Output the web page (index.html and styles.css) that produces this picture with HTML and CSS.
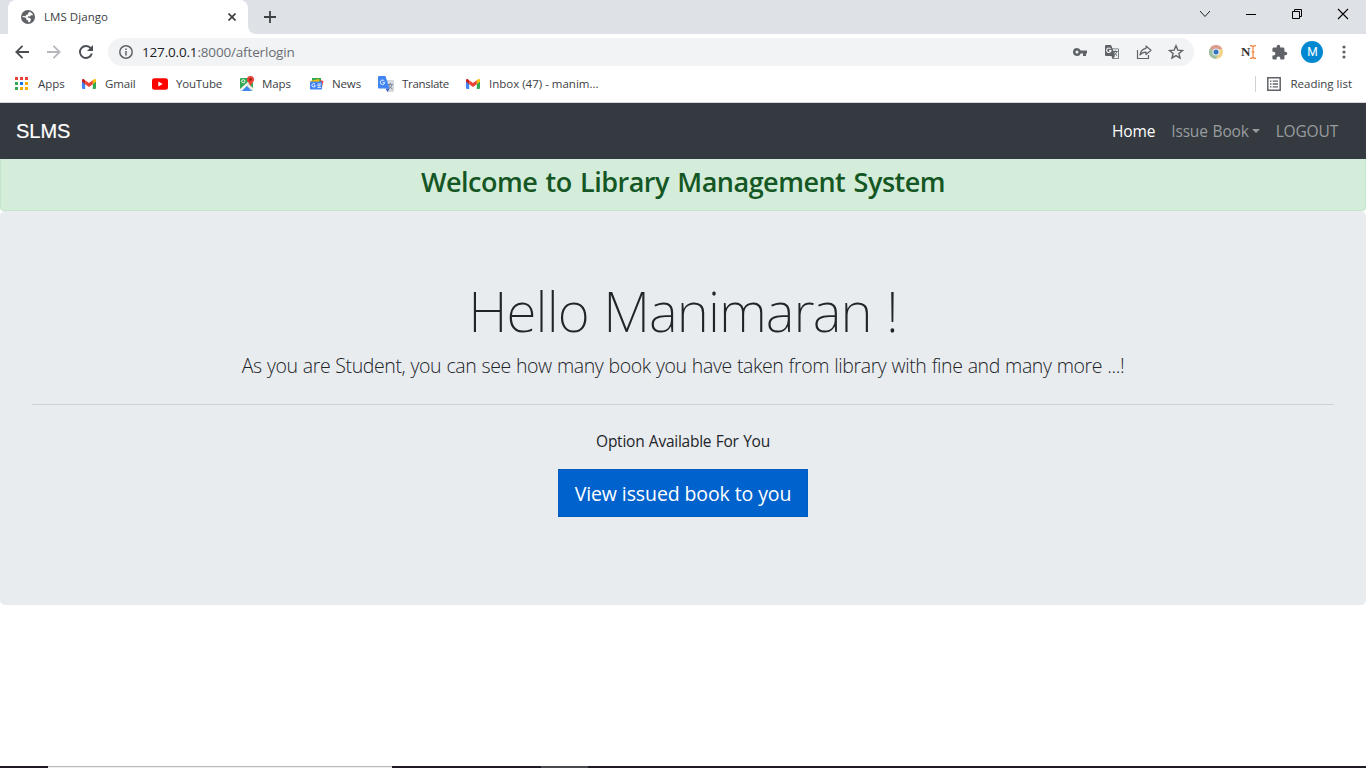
FILE: index.html
```html
<!DOCTYPE html>
<html lang="en">
<head>
<meta charset="utf-8">
<title>LMS Django</title>
<link rel="stylesheet" href="styles.css">
</head>
<body>
<div class="window">
  <header class="tabstrip">
    <div class="tab">
      <svg class="globe" width="14" height="14" viewBox="0 0 14 14"><circle cx="7" cy="7" r="7" fill="#5f6368"/><path d="M8.300 1.800c1.800.4 3.200 1.700 3.800 3.400H9.800L9 6.500 7.200 6.200 6.500 7.500l2.300.6 1.200 1.200-.8 2.500-2 .6.100-1.700-2-1.200L5 7.800 1.500 7V6l2.800.2L5.200 5l1.600-.5.3-1.300z" fill="#fff"/></svg>
      <span class="tab-title">LMS Django</span>
      <svg class="tab-close" width="8" height="8" viewBox="0 0 8 8"><path d="M.5.5l7 7M7.500.5l-7 7" stroke="#3c4043" stroke-width="1.700"/></svg>
    </div>
    <svg class="tab-foot" width="8" height="8" viewBox="0 0 8 8"><path d="M0 0a8 8 0 0 0 8 8H0z" fill="#fff"/></svg>
    <svg class="tab-new" width="12" height="12" viewBox="0 0 12 12"><path d="M6 0v12M0 6h12" stroke="#3c4043" stroke-width="1.800"/></svg>
    <div class="controls">
      <svg width="12" height="12" viewBox="0 0 12 12"><path d="M1 3l5 5.500L11 3" fill="none" stroke="#222" stroke-width="1"/></svg>
      <svg width="12" height="12" viewBox="0 0 12 12"><path d="M1 6.500h10" stroke="#000"/></svg>
      <svg width="12" height="12" viewBox="0 0 12 12"><path d="M1.500 3.500h7v7h-7zM3.500 3V1.500h7v7H9" fill="none" stroke="#000"/></svg>
      <svg width="12" height="12" viewBox="0 0 12 12"><path d="M1 1l10 10M11 1L1 11" stroke="#000" stroke-width="1.100"/></svg>
    </div>
  </header>

  <div class="toolbar">
    <svg class="nav-icon" width="14" height="14" viewBox="0 0 14 14"><path d="M14 7H1.500M7.500.8L1.300 7l6.200 6.200" fill="none" stroke="#4b4f54" stroke-width="1.800"/></svg>
    <svg class="nav-icon" width="14" height="14" viewBox="0 0 14 14"><path d="M0 7h12.500M6.500.8L12.700 7l-6.200 6.200" fill="none" stroke="#b6b8bb" stroke-width="1.800"/></svg>
    <svg class="nav-icon" width="14" height="14" viewBox="0 0 14 14"><path d="M11.800 3.400A6 6 0 1 0 12.800 8.500" fill="none" stroke="#4b4f54" stroke-width="1.900"/><path d="M14 0v6H8z" fill="#4b4f54"/></svg>
    <div class="omnibox">
      <svg width="14" height="14" viewBox="0 0 14 14"><circle cx="7" cy="7" r="6.200" fill="none" stroke="#5f6368" stroke-width="1.500"/><path d="M7 6v4.500M7 3.400v1.500" stroke="#5f6368" stroke-width="1.500"/></svg>
      <span class="url"><span class="host">127.0.0.1</span>:8000/afterlogin</span>
      <div class="omni-icons">
        <svg width="16" height="16" viewBox="0 0 16 16"><path fill-rule="evenodd" d="M5 4a4 4 0 1 0 3.700 5.500H11V12h3V9.500h1v-3H8.700A4 4 0 0 0 5 4zm0 2.500a1.500 1.500 0 1 1 0 3 1.500 1.500 0 0 1 0-3z" fill="#5f6368"/></svg>
        <svg width="16" height="16" viewBox="0 0 16 16"><path d="M2 1h5l1.500 3.500H14a1 1 0 0 1 1 1V14a1 1 0 0 1-1 1H8.500L7.500 12H2a1 1 0 0 1-1-1V2a1 1 0 0 1 1-1z" fill="#5f6368"/><path d="M8.800 5.300h5.400v8.900H9.300l1.600-2z" fill="#f1f3f4"/><path d="M6.700 5A2.200 2.200 0 1 0 7 6.600H5" fill="none" stroke="#f1f3f4" stroke-width="1.100"/><path d="M9 7.500h4.700M11.300 6.500v1M12.800 7.500c-.4 1.700-1.500 3-3 4M10 8c.7 1.700 2 2.800 3.300 3.800" fill="none" stroke="#5f6368"/></svg>
        <svg width="16" height="16" viewBox="0 0 16 16"><path d="M1.500 6v8.500h11V11" fill="none" stroke="#5f6368" stroke-width="1.200"/><path d="M10 2l5 4.300-5 4.200V8.200c-3 0-4.500.8-6 2.800.5-3.500 2.500-6.200 6-6.700z" fill="none" stroke="#5f6368" stroke-width="1.200" stroke-linejoin="round"/></svg>
        <svg width="16" height="16" viewBox="0 0 16 16"><path d="M8 1.800l1.800 4.300 4.700.4-3.600 3 1.100 4.600L8 11.600l-4 2.500 1.100-4.600-3.600-3 4.700-.4z" fill="none" stroke="#5f6368" stroke-width="1.400"/></svg>
      </div>
    </div>
    <div class="extensions">
      <svg width="14" height="14" viewBox="0 0 14 14"><circle cx="7" cy="7" r="7" fill="#f0d48a"/><path d="M7 7L1 3.300A7 7 0 0 1 13.300 4H7z" fill="#dc9a8c"/><path d="M7 7L1 3.300A7 7 0 0 0 6.500 14l3-5z" fill="#9fc0a3"/><circle cx="7" cy="7" r="3.600" fill="#e8eef5"/><circle cx="7" cy="7" r="2.500" fill="#3474bd"/></svg>
      <div class="ext-n"><span>N</span><svg width="6" height="14" viewBox="0 0 6 14"><path d="M0 .6c1.500 0 3 .4 3 1.400 0-1 1.500-1.400 3-1.400M3 2v10M0 13.400c1.500 0 3-.4 3-1.400 0 1 1.500 1.400 3 1.400M1.500 7h3" fill="none" stroke="#f0833a" stroke-width="1.200"/></svg></div>
      <svg width="17" height="17" viewBox="0 0 24 24"><path d="M20.500 11H19V7c0-1.100-.9-2-2-2h-4V3.500a2.500 2.500 0 0 0-5 0V5H4c-1.100 0-2 .9-2 2v3.800h1.500a2.700 2.700 0 0 1 0 5.400H2V20c0 1.100.9 2 2 2h3.800v-1.500a2.700 2.700 0 0 1 5.400 0V22H17c1.100 0 2-.9 2-2v-4h1.500a2.500 2.500 0 0 0 0-5z" fill="#5f6368"/></svg>
      <div class="avatar">M</div>
      <svg class="dots" width="4" height="14" viewBox="0 0 4 14"><g fill="#5f6368"><circle cx="2" cy="2" r="1.600"/><circle cx="2" cy="7" r="1.600"/><circle cx="2" cy="12" r="1.600"/></g></svg>
    </div>
  </div>

  <nav class="bookmarks">
    <a class="bm apps"><svg width="14" height="14" viewBox="0 0 14 14"><path d="M0 0h3v3H0zM5 0h3v3H5zM10 0h3v3h-3z" fill="#ea4335"/><path d="M0 5h3v3H0zM0 10h3v3H0z" fill="#34a853"/><path d="M5 5h3v3H5z" fill="#1a73e8"/><path d="M10 5h3v3h-3zM5 10h3v3H5zM10 10h3v3h-3z" fill="#f9ab00"/></svg><span>Apps</span></a>
    <a class="bm gmail"><svg width="14" height="12" viewBox="0 0 14 12"><path d="M0 2v8a1 1 0 0 0 1 1h2.200V4.500z" fill="#4285f4"/><path d="M14 2v8a1 1 0 0 1-1 1h-2.200V4.500z" fill="#34a853"/><path d="M10.800 2.200L12 1.200c.8-.7 2-.1 2 1v1.500l-3.200 2.500z" fill="#fbbc04"/><path d="M3.200 2.200L2 1.200c-.8-.7-2-.1-2 1v1.500l3.200 2.500z" fill="#c5221f"/><path d="M3.200 2.200L7 5l3.800-2.800v4L7 9 3.200 6.200z" fill="#ea4335"/></svg><span>Gmail</span></a>
    <a class="bm youtube"><svg width="16" height="12" viewBox="0 0 16 12"><rect y=".3" width="16" height="11.400" rx="2.500" fill="#f00"/><path d="M6.300 3.500v5L10.700 6z" fill="#fff"/></svg><span>YouTube</span></a>
    <a class="bm maps"><svg width="16" height="16" viewBox="0 0 16 16"><path d="M2 2h8l4 5v7a1 1 0 0 1-1 1H2a1 1 0 0 1-1-1V3a1 1 0 0 1 1-1z" fill="#34a853"/><path d="M1 13L11 4l1 2L3 15H2a1 1 0 0 1-1-1z" fill="#f2f2f2"/><path d="M3 15l5-5 5 5z" fill="#4285f4"/><path d="M8 10l2-2 4 4v2l-1 1z" fill="#e8eaed"/><circle cx="4.300" cy="5.200" r="1.600" fill="none" stroke="#fff" stroke-width=".9"/><path d="M11.500 0A3.500 3.500 0 0 0 8 3.500c0 2.500 2.800 3.500 3.500 7 .7-3.500 3.500-4.500 3.500-7A3.500 3.500 0 0 0 11.500 0z" fill="#ea4335"/><circle cx="11.500" cy="3.500" r="1.300" fill="#8c1d18"/></svg><span>Maps</span></a>
    <a class="bm news"><svg width="15" height="14" viewBox="0 0 15 14"><path d="M3 1h9v4H3z" fill="#34a853"/><path d="M1 4l9-2 1 5-9 2z" fill="#fbbc04"/><path d="M11 3l3.500 1L13 10z" fill="#ea4335"/><rect x="1" y="4.500" width="12" height="8" rx="1" fill="#4285f4"/><path d="M6 7.300A1.700 1.700 0 1 0 6.300 8.700H5M8.500 7H12M8.500 8.700h3M8.500 10.400H12" fill="none" stroke="#fff" stroke-width=".9"/></svg><span>News</span></a>
    <a class="bm translate"><svg width="16" height="16" viewBox="0 0 16 16"><path d="M7 4h8a1 1 0 0 1 1 1v10a1 1 0 0 1-1 1H9.500z" fill="#d5d8dc"/><path d="M9.500 8.500h5.500M12.300 7v1.500M14 8.500c-.6 2-1.500 3.200-3.500 4.500M10.800 9c.8 1.800 2 3 3.700 4" fill="none" stroke="#74808f" stroke-width=".9"/><path d="M7.500 12.500h4L9.500 16z" fill="#3454c4"/><path d="M1 0h6.500l4 12.500H1a1 1 0 0 1-1-1V1a1 1 0 0 1 1-1z" fill="#4285f4"/><path d="M6.300 5A2.200 2.200 0 1 0 6.700 6.700H4.800" fill="none" stroke="#fff" stroke-width="1"/></svg><span>Translate</span></a>
    <a class="bm inbox"><svg width="14" height="12" viewBox="0 0 14 12"><path d="M0 2v8a1 1 0 0 0 1 1h2.200V4.500z" fill="#4285f4"/><path d="M14 2v8a1 1 0 0 1-1 1h-2.200V4.500z" fill="#34a853"/><path d="M10.800 2.200L12 1.200c.8-.7 2-.1 2 1v1.500l-3.200 2.500z" fill="#fbbc04"/><path d="M3.200 2.200L2 1.200c-.8-.7-2-.1-2 1v1.500l3.200 2.500z" fill="#c5221f"/><path d="M3.200 2.200L7 5l3.800-2.800v4L7 9 3.200 6.200z" fill="#ea4335"/></svg><span>Inbox (47) - manim...</span></a>
    <a class="bm reading"><svg width="14" height="14" viewBox="0 0 14 14"><path d="M.8.800h12.400v12.400H.8z" fill="none" stroke="#5f6368" stroke-width="1.500"/><path d="M3 4.200h1.500M3 7h1.500M3 9.800h1.500M5.700 4.200H11M5.700 7H11M5.700 9.800H11" stroke="#5f6368" stroke-width="1.300"/></svg><span>Reading list</span></a>
  </nav>

  <nav class="navbar">
    <a class="brand">SLMS</a>
    <div class="links">
      <a class="link home">Home</a>
      <a class="link issue"><span>Issue Book</span><i class="caret"></i></a>
      <a class="link logout">LOGOUT</a>
    </div>
  </nav>

  <div class="alert"><h3 class="welcome">Welcome to Library Management System</h3></div>

  <main class="jumbotron">
    <h1 class="hello">Hello Manimaran !</h1>
    <p class="lead">As you are Student, you can see how many book you have taken from library with fine and many more ...!</p>
    <hr class="rule">
    <p class="option">Option Available For You</p>
    <a class="btn">View issued book to you</a>
  </main>

  <footer class="taskbar"><span class="seg-gap"></span><span class="seg-active"></span><span class="seg-dark"></span><span class="seg-grey"></span></footer>
</div>
</body>
</html>
```
FILE: styles.css
```css
* { box-sizing: border-box; }
body { margin: 0; font-family: "Open Sans", "Noto Sans", sans-serif; color: #212529; background: #fff; overflow: hidden; }
svg { display: block; flex: none; }
span, a { white-space: nowrap; }
.window { width: 1366px; height: 768px; display: flex; flex-direction: column; }

.tabstrip { height: 34px; background: #dee1e6; display: flex; align-items: center; padding-left: 8px; flex: none; }
.tab { width: 240px; height: 34px; background: #fff; border-radius: 8px 8px 0 0; display: flex; align-items: center; padding: 0 12px 0 13px; }
.tab-title { font-size: 11.5px; color: #3c4043; margin-left: 9px; padding-bottom: 2px; letter-spacing: .05px; }
.tab-close { margin-left: auto; }
.tab-foot { align-self: flex-end; }
.tab-new { margin-left: 8px; }
.controls { margin-left: auto; display: flex; gap: 34px; padding-right: 17px; padding-bottom: 6px; }

.toolbar { height: 36px; display: flex; align-items: center; padding-left: 15px; flex: none; }
.nav-icon { margin-right: 18px; }
.omnibox { margin-left: -3px; width: 1086px; height: 28px; border-radius: 14px; background: #f1f3f4; display: flex; align-items: center; padding: 0 10px 0 11px; }
.url { font-size: 13.5px; color: #6a6e73; margin-left: 9px; letter-spacing: -.17px; }
.host { color: #202124; }
.omni-icons { margin-left: auto; display: flex; gap: 16px; }
.extensions { display: flex; align-items: center; margin-left: 15px; }
.ext-n { display: flex; align-items: center; margin: 0 15px 0 18px; }
.ext-n span { font: bold 13px "Liberation Serif", serif; color: #333; }
.avatar { width: 22px; height: 22px; border-radius: 50%; background: #0288d1; color: #fff; font: 12px/22px Roboto, sans-serif; text-align: center; margin: 0 19px 0 13px; }

.bookmarks { height: 33px; border-bottom: 1px solid #d5d7db; display: flex; align-items: center; padding: 0 14px 5px 15px; flex: none; }
.bm { display: flex; align-items: center; flex: none; font-size: 11.5px; color: #3c4043; line-height: 16px; }
.apps { width: 67px; gap: 9px; }
.gmail { width: 70px; gap: 9px; letter-spacing: -.14px; }
.youtube { width: 87px; gap: 8px; letter-spacing: -.18px; }
.maps { width: 70px; gap: 7px; letter-spacing: -.06px; }
.news { width: 69px; gap: 8px; letter-spacing: -.13px; }
.translate { width: 88px; gap: 8px; letter-spacing: -.31px; }
.inbox { gap: 9px; }
.reading { margin-left: auto; gap: 9px; border-left: 1px solid #cfd1d5; padding-left: 11px; }

.navbar { height: 56px; background: #343a40; display: flex; align-items: center; justify-content: space-between; padding: 0 28px 0 16px; flex: none; }
.brand { font: 20px/30px "Liberation Sans", sans-serif; color: #fff; -webkit-text-stroke: .2px #fff; }
.links { display: flex; gap: 16px; font-size: 15.5px; color: #999c9f; letter-spacing: -.17px; }
.link { display: flex; align-items: center; }
.home { color: #fff; }
.issue { word-spacing: 1px; }
.caret { border: 4.800px solid transparent; border-top-color: #999c9f; border-bottom: 0; margin-left: 3px; }

.alert { height: 52px; background: #d4edda; border: 1px solid #c3e6cb; border-top: 0; border-radius: 0 0 4px 4px; text-align: center; color: #155724; flex: none; }
.welcome { margin: 0; padding-top: 6px; font-size: 27px; line-height: 34px; font-weight: 600; letter-spacing: -.5px; word-spacing: 1.8px; }

.jumbotron { height: 394px; background: #e9ecef; border-radius: 5px; text-align: center; padding: 66px 32px 0; flex: none; }
.hello { margin: 0; font: 200 55px/67px "Noto Sans", sans-serif; letter-spacing: -.9px; word-spacing: 1px; }
.lead { margin: 7px 0 0; font-size: 19.500px; line-height: 30px; font-weight: 300; letter-spacing: -.4px; word-spacing: .5px; }
.rule { margin: 23px 0 24px; border: 0; border-top: 1px solid #cfd3d6; }
.option { margin: 0 0 16px; font-size: 15.500px; line-height: 24px; letter-spacing: -.25px; word-spacing: .7px; }
.btn { display: inline-block; width: 250px; height: 48px; background: #0062cc; border: 1px solid #005cbf; color: #fff; font-size: 19.500px; line-height: 48px; letter-spacing: -.1px; }

.taskbar { margin-top: auto; height: 2px; background: #1f1a24; display: flex; }
.seg-gap { width: 48px; }
.seg-active { width: 344px; background: #f0f0f0; border-top: 1px solid #b8b8b8; }
.seg-dark { width: 149px; }
.seg-grey { width: 47px; background: #4a484c; }
```
